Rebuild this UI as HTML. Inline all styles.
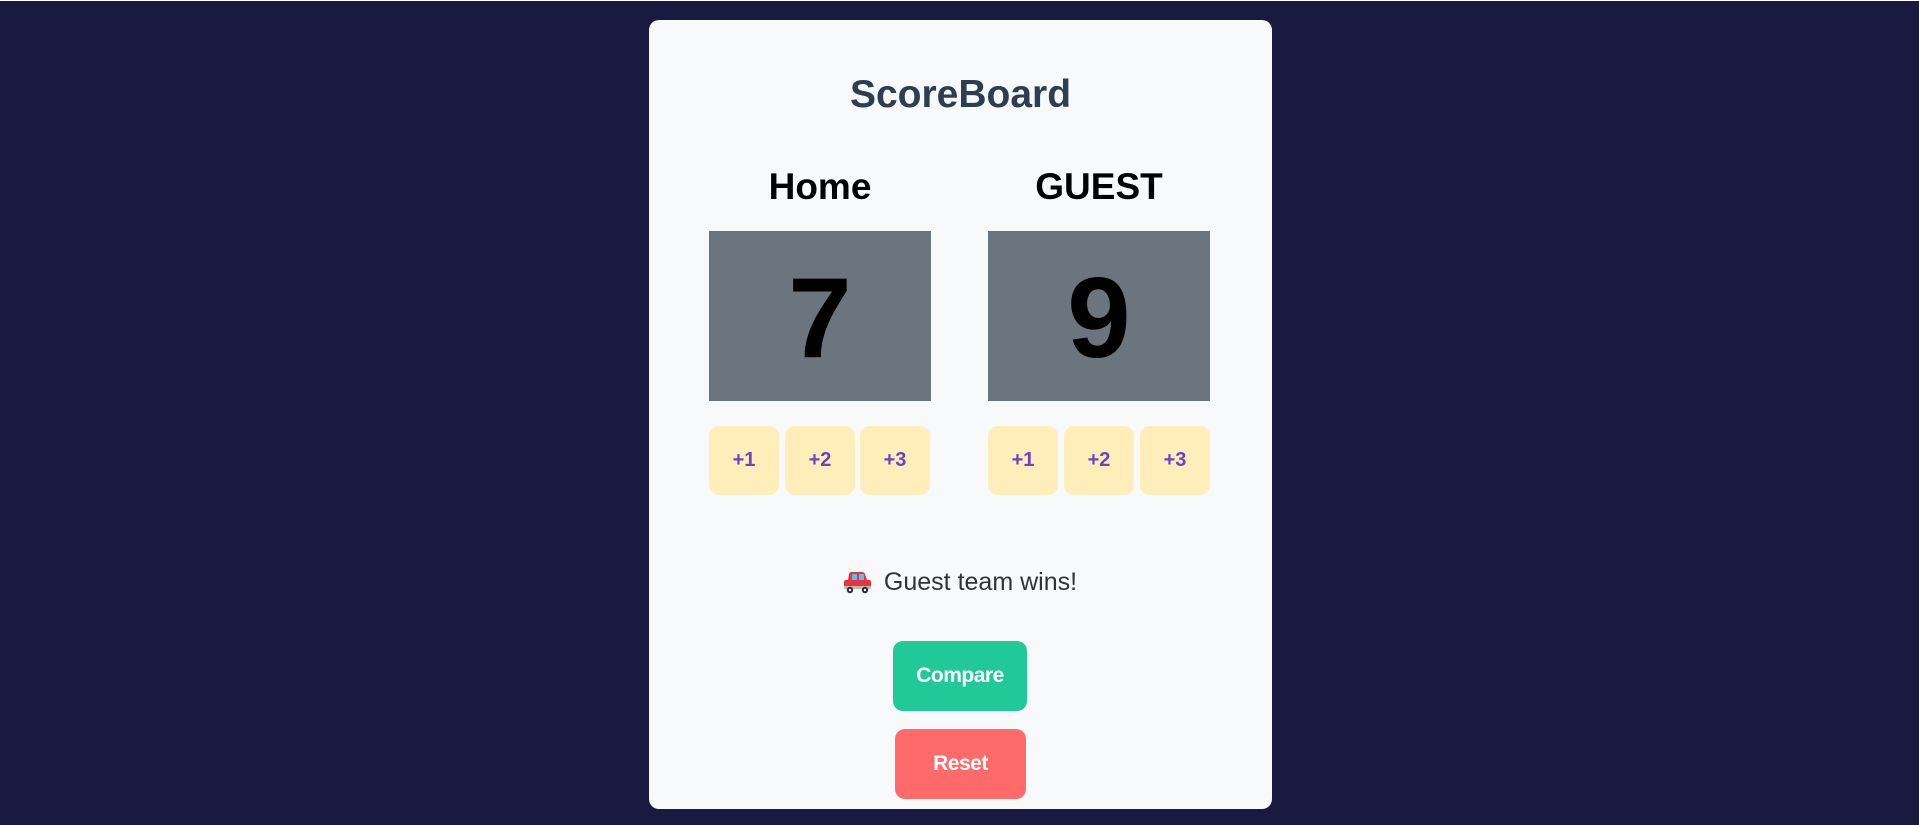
<!DOCTYPE html>
<html><head><meta charset="utf-8"><style>
html,body{margin:0;padding:0;}
body{width:1919px;height:825px;background:#1a1a40;position:relative;overflow:hidden;font-family:"Liberation Sans",sans-serif;border-top:1px solid #fff;box-sizing:border-box;}
.card{position:absolute;left:649px;top:19px;width:623px;height:789px;background:#f8f9fa;border-radius:10px;}
h1{position:absolute;left:0;width:623px;top:52px;margin:0;text-align:center;font-size:39px;line-height:46px;color:#2c3e50;font-weight:bold;}
.team{position:absolute;width:222px;text-align:center;font-size:37px;font-weight:bold;color:#000;top:145px;line-height:44px;}
.score{position:absolute;top:211px;width:222px;height:170px;background:#6c757d;color:#000;font-weight:bold;font-size:114px;line-height:176px;text-align:center;}
.btn{position:absolute;top:406px;width:70px;height:69px;background:#ffeeba;border-radius:10px;color:#6f42c1;font-weight:bold;font-size:20px;line-height:69px;text-align:center;}
.msg{position:absolute;left:0;width:623px;top:544px;text-align:center;font-size:25px;color:#333;line-height:36px;}
.big{position:absolute;width:134px;height:70px;border-radius:10px;color:#fff;font-weight:bold;font-size:21px;line-height:70px;text-align:center;letter-spacing:-0.5px;}
</style></head><body>
<div class="card">
<h1>ScoreBoard</h1>
<div class="team" style="left:60px">Home</div>
<div class="team" style="left:339px">GUEST</div>
<div class="score" style="left:60px">7</div>
<div class="score" style="left:339px">9</div>
<div class="btn" style="left:60px">+1</div>
<div class="btn" style="left:136px">+2</div>
<div class="btn" style="left:211px">+3</div>
<div class="btn" style="left:339px">+1</div>
<div class="btn" style="left:415px">+2</div>
<div class="btn" style="left:491px">+3</div>
<div class="msg"><svg width="27" height="24" viewBox="0 0 27 24" style="vertical-align:-4px;margin-right:13px"><path d="M7 2h11q2 0 3 2l2 6h2q2 0 2 2v6H0v-6q0-2 2-2h2l1-6q1-2 2-2z" fill="#e8333a"/><rect x="8" y="4" width="5" height="6" fill="#4fc3f7"/><rect x="15" y="4" width="5" height="6" fill="#4fc3f7"/><rect x="0" y="16" width="27" height="3" fill="#bbb"/><circle cx="6" cy="20" r="3.2" fill="#2a2a3a"/><circle cx="21" cy="20" r="3.2" fill="#2a2a3a"/><circle cx="6" cy="20" r="1.2" fill="#fff"/><circle cx="21" cy="20" r="1.2" fill="#fff"/></svg>Guest team wins!</div>
<div class="big" style="left:244px;top:621px;background:#20c997">Compare</div>
<div class="big" style="left:246px;top:709px;width:131px;background:#ff6b6b">Reset</div>
</div>
</body></html>
